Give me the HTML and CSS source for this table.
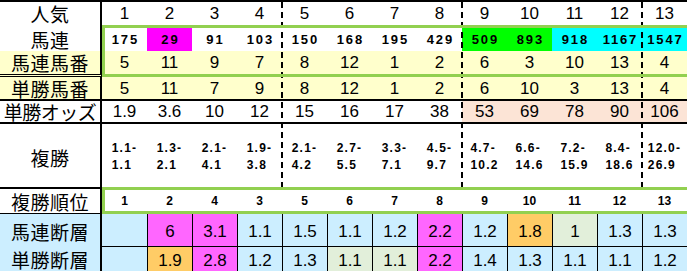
FILE: index.html
```html
<!DOCTYPE html>
<html lang="ja">
<head>
<meta charset="utf-8">
<link rel="stylesheet" href="styles.css">
</head>
<body>
<div class="wrap">
  <div class="sheet">
    <div class="cell lab r1">人気</div>
    <div class="cell r1">1</div><div class="cell r1">2</div><div class="cell r1">3</div><div class="cell r1">4</div><div class="cell r1">5</div><div class="cell r1">6</div><div class="cell r1">7</div><div class="cell r1">8</div><div class="cell r1">9</div><div class="cell r1">10</div><div class="cell r1">11</div><div class="cell r1">12</div><div class="cell r1">13</div>

    <div class="cell lab r2">馬連</div>
    <div class="cell r2">175</div><div class="cell r2 mag">29</div><div class="cell r2">91</div><div class="cell r2">103</div><div class="cell r2">150</div><div class="cell r2">168</div><div class="cell r2">195</div><div class="cell r2">429</div><div class="cell r2 grn">509</div><div class="cell r2 grn">893</div><div class="cell r2 cyn">918</div><div class="cell r2 cyn">1167</div><div class="cell r2 cyn">1547</div>

    <div class="cell lab r3">馬連馬番</div>
    <div class="cell r3">5</div><div class="cell r3">11</div><div class="cell r3">9</div><div class="cell r3">7</div><div class="cell r3">8</div><div class="cell r3">12</div><div class="cell r3">1</div><div class="cell r3">2</div><div class="cell r3">6</div><div class="cell r3">3</div><div class="cell r3">10</div><div class="cell r3">13</div><div class="cell r3">4</div>

    <div class="cell lab r4">単勝馬番</div>
    <div class="cell r4">5</div><div class="cell r4">11</div><div class="cell r4">7</div><div class="cell r4">9</div><div class="cell r4">8</div><div class="cell r4">12</div><div class="cell r4">1</div><div class="cell r4">2</div><div class="cell r4">6</div><div class="cell r4">10</div><div class="cell r4">3</div><div class="cell r4">13</div><div class="cell r4">4</div>

    <div class="cell lab r5 tight">単勝オッズ</div>
    <div class="cell r5">1.9</div><div class="cell r5">3.6</div><div class="cell r5">10</div><div class="cell r5">12</div><div class="cell r5">15</div><div class="cell r5">16</div><div class="cell r5">17</div><div class="cell r5">38</div><div class="cell r5 pch">53</div><div class="cell r5 pch">69</div><div class="cell r5 pch">78</div><div class="cell r5 pch">90</div><div class="cell r5 pch">106</div>

    <div class="cell lab r6">複勝</div>
    <div class="cell r6"><span class="pl">1.1-<br>1.1</span></div>
    <div class="cell r6"><span class="pl">1.3-<br>2.1</span></div>
    <div class="cell r6"><span class="pl">2.1-<br>4.1</span></div>
    <div class="cell r6"><span class="pl">1.9-<br>3.8</span></div>
    <div class="cell r6"><span class="pl">2.1-<br>4.2</span></div>
    <div class="cell r6"><span class="pl">2.7-<br>5.5</span></div>
    <div class="cell r6"><span class="pl">3.3-<br>7.1</span></div>
    <div class="cell r6"><span class="pl">4.5-<br>9.7</span></div>
    <div class="cell r6"><span class="pl">4.7-<br>10.2</span></div>
    <div class="cell r6"><span class="pl">6.6-<br>14.6</span></div>
    <div class="cell r6"><span class="pl">7.2-<br>15.9</span></div>
    <div class="cell r6"><span class="pl">8.4-<br>18.6</span></div>
    <div class="cell r6"><span class="pl">12.0-<br>26.9</span></div>

    <div class="cell lab r7">複勝順位</div>
    <div class="cell r7">1</div><div class="cell r7">2</div><div class="cell r7">4</div><div class="cell r7">3</div><div class="cell r7">5</div><div class="cell r7">6</div><div class="cell r7">7</div><div class="cell r7">8</div><div class="cell r7">9</div><div class="cell r7">10</div><div class="cell r7">11</div><div class="cell r7">12</div><div class="cell r7">13</div>

    <div class="cell lab r8 blu">馬連断層</div>
    <div class="cell r8 blu first"></div><div class="cell r8 pnk">6</div><div class="cell r8 pnk">3.1</div><div class="cell r8 blu">1.1</div><div class="cell r8 blu">1.5</div><div class="cell r8 blu">1.1</div><div class="cell r8 blu">1.2</div><div class="cell r8 pnk">2.2</div><div class="cell r8 blu">1.2</div><div class="cell r8 org">1.8</div><div class="cell r8 pgr">1</div><div class="cell r8 blu">1.3</div><div class="cell r8 blu">1.3</div>

    <div class="cell lab r9 blu">単勝断層</div>
    <div class="cell r9 blu first"></div><div class="cell r9 org">1.9</div><div class="cell r9 pnk">2.8</div><div class="cell r9 blu">1.2</div><div class="cell r9 blu">1.3</div><div class="cell r9 pgr">1.1</div><div class="cell r9 pgr">1.1</div><div class="cell r9 pnk">2.2</div><div class="cell r9 blu">1.4</div><div class="cell r9 blu">1.3</div><div class="cell r9 blu">1.1</div><div class="cell r9 blu">1.1</div><div class="cell r9 blu">1.2</div>
  </div>

  <div class="overlay">
    <div class="dash d1"></div>
    <div class="dash d2"></div>
    <div class="dash d3"></div>
    <div class="gbox g1"></div>
    <div class="gbox g2"></div>
  </div>
</div>
</body>
</html>
```

FILE: styles.css
```css
html, body {
  margin: 0;
  padding: 0;
  background: #fff;
  overflow: hidden;
}
body {
  font-family: "Liberation Sans", Arial, sans-serif;
  color: #000;
}
.wrap {
  display: grid;
  width: 687px;
  height: 271px;
}
.sheet, .overlay {
  grid-area: 1 / 1;
  display: grid;
  grid-template-columns: 102px repeat(13, 45px);
  grid-template-rows: 25px 26px 26px 24px 23px 63px 27px 33px 24px;
}
.overlay {
  pointer-events: none;
}
.cell {
  box-sizing: border-box;
  display: flex;
  align-items: center;
  justify-content: center;
  white-space: nowrap;
  font-size: 17px;
  line-height: 1;
}
.lab {
  font-family: "Noto Sans CJK JP", "Liberation Sans", sans-serif;
  font-size: 19px;
  line-height: 19px;
  border-right: 2px solid #000;
  letter-spacing: 0.5px;
}
.lab.tight {
  letter-spacing: -0.5px;
}

/* rows */
.r1 { border-top: 2px solid #000; }
.r2 { padding-top: 3px; font-size: 13px; font-weight: bold; letter-spacing: 1.8px; text-indent: 1.8px; }
.r2.lab { font-size: 19px; font-weight: normal; letter-spacing: 0.5px; text-indent: 0; }
.r3 { padding-bottom: 3px; background: #ffffcc; }
.r3.lab { padding-bottom: 0; border-bottom: 3px double #000; }
.r4 { background: #ffffcc; border-bottom: 2px solid #000; }
.r5 { border-bottom: 2px solid #000; }
.r6 { padding-top: 3px; }
.r6 .pl {
  display: inline-block;
  text-align: left;
  font-size: 12px;
  font-weight: bold;
  letter-spacing: 1.2px;
  line-height: 17px;
}
.r7 { padding-top: 3px; padding-bottom: 3px; font-size: 12px; font-weight: bold; }
.r7.lab { font-size: 19px; font-weight: normal; border-top: 2px solid #000; border-bottom: 1px solid #000; padding: 0; }
.r8 { border-bottom: 1px solid #000; border-left: 1px solid #000; padding-top: 2px; }
.r9 { border-left: 1px solid #000; padding-top: 3px; }
.r8.lab { border-left: none; border-bottom: none; }
.r9.lab { border-left: none; padding-top: 0; }
.first { border-left: none; }

/* fills */
.mag { background: #ff00ff; }
.grn { background: #00ff00; }
.cyn { background: #00ffff; }
.pch { background: #fce4d6; }
.blu { background: #cceeff; }
.pnk { background: #ff66ff; }
.org { background: #ffcc66; }
.pgr { background: #e2efda; }

/* overlays */
.dash {
  grid-row: 1 / 7;
  justify-self: start;
  width: 2px;
  margin-left: -1px;
  background: repeating-linear-gradient(to bottom, transparent 0 2px, #000 2px 8px, transparent 8px 10px);
}
.d1 { grid-column: 6; }
.d2 { grid-column: 10; }
.d3 { grid-column: 14; }
.gbox {
  grid-column: 2 / -1;
  border: 3px solid #92d050;
  border-right: none;
}
.g1 { grid-row: 2 / 4; }
.g2 { grid-row: 7; }
```
